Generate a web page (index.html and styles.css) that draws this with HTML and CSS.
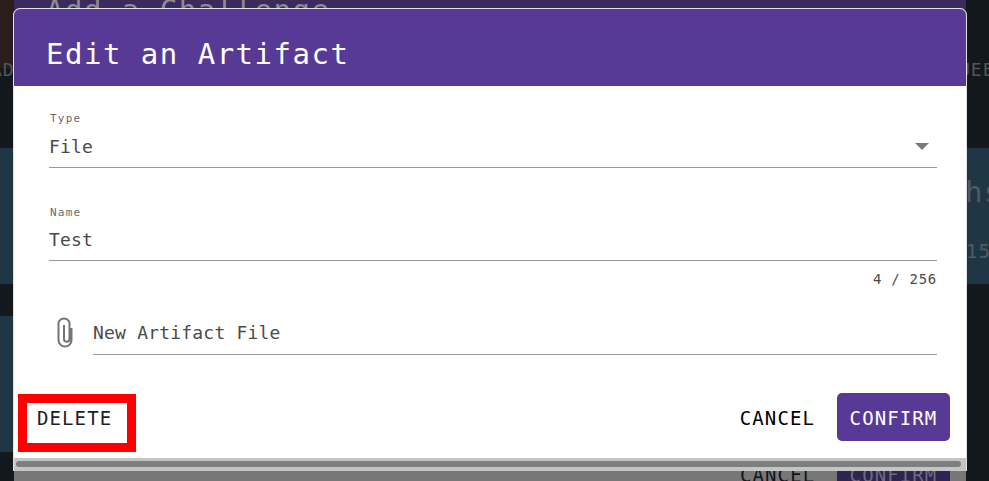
FILE: index.html
```html
<!DOCTYPE html>
<html lang="en">
<head>
<meta charset="utf-8">
<title>Edit an Artifact</title>
<link rel="stylesheet" href="styles.css">
</head>
<body>
<div class="backdrop">
  <div class="bg-strip"></div>
  <div class="bg-title-bar"><span class="bg-title">Add a Challenge</span></div>
  <span class="bg-text bg-left">AD</span>
  <span class="bg-text bg-right">UEE</span>
  <div class="bg-card bg-card-one"><span class="bg-big">hs</span><span class="bg-small">15</span></div>
  <div class="bg-card bg-card-two"></div>
  <div class="bg-under"><span class="bg-cancel">CANCEL</span><span class="bg-confirm">CONFIRM</span></div>
</div>
<main class="dialog">
  <header class="dialog-head"><h1 class="dialog-title">Edit an Artifact</h1></header>
  <div class="dialog-body">
    <div class="field">
      <span class="field-label">Type</span>
      <div class="field-row"><span class="field-value">File</span><span class="arrow"></span></div>
    </div>
    <div class="field field-name">
      <span class="field-label">Name</span>
      <div class="field-row field-row-name"><span class="field-value">Test</span></div>
      <div class="counter">4 / 256</div>
    </div>
    <div class="file-row">
      <svg class="clip" width="20" height="32" viewBox="0 0 20 32" fill="none" stroke="#747474" stroke-width="2">
        <path d="M15.5 11 V23 a6.5 6.5 0 0 1 -13 0 V6.5 a5.5 5 0 0 1 11 0 V22 a2.75 2.75 0 0 1 -5.5 0 V8"/>
      </svg>
      <div class="file-input"><span class="field-value">New Artifact File</span></div>
    </div>
  </div>
  <footer class="dialog-foot">
    <span class="delete-mark"><button class="btn btn-delete">DELETE</button></span>
    <div class="foot-right">
      <button class="btn btn-cancel">CANCEL</button>
      <button class="btn btn-confirm">CONFIRM</button>
    </div>
  </footer>
  <div class="scrollbar"><div class="scroll-thumb"></div></div>
</main>
</body>
</html>
```

FILE: styles.css
```css
* { box-sizing: border-box; }
html, body { margin: 0; height: 100%; overflow: hidden; }
body {
  position: relative;
  width: 989px;
  height: 481px;
  background: #12181c;
  font-family: "DejaVu Sans Mono", "Liberation Mono", monospace;
  color: #4a4a4a;
}
.backdrop { position: absolute; inset: 0; overflow: hidden; }
.bg-strip { position: absolute; left: 0; top: 0; width: 14px; height: 68px; background: #2b1d1b; }
.bg-title-bar {
  position: absolute; left: 14px; top: 0; width: 952px; height: 9px;
  background: #3a2a5e; overflow: hidden;
}
.bg-title { position: absolute; left: 32px; top: -8px; font-size: 29px; line-height: 36px; letter-spacing: 1.5px; color: #8e8a99; white-space: nowrap; }
.bg-text { position: absolute; top: 59px; font-size: 18px; line-height: 22px; letter-spacing: 1px; color: #555; }
.bg-left { left: -9px; }
.bg-right { left: 959px; }
.bg-card { position: absolute; left: 0; background: #1f3645; overflow: hidden; }
.bg-card-one { top: 148px; height: 136px; width: 989px; }
.bg-card-two { top: 316px; height: 136px; width: 14px; }
.bg-big { position: absolute; left: 965px; top: 26px; font-size: 29px; line-height: 36px; letter-spacing: 1.4px; color: #4e5c62; }
.bg-small { position: absolute; left: 966px; top: 92px; font-size: 19px; line-height: 22px; letter-spacing: 1px; color: #4e5c62; }
.bg-under {
  position: absolute; left: 14px; top: 440px; width: 952px; height: 41px;
  background: #777;
  padding: 23px 16px 0 726px;
  display: flex; justify-content: space-between;
  font-size: 19px; line-height: 24px; letter-spacing: 1.1px; color: #14141a;
}
.bg-confirm { width: 113px; height: 30px; background: #2e2452; color: #6d6a7c; text-align: center; }

.dialog {
  position: absolute; left: 13px; top: 8px; width: 954px; height: 463px;
  background: #fff;
  border: 1px solid #e2e2e2;
  border-bottom: 0;
  border-radius: 7px 7px 0 0;
  overflow: hidden;
  display: flex; flex-direction: column;
}
.dialog-head { height: 77px; background: #563a96; padding: 21px 32px 0; flex: none; }
.dialog-title { margin: 0; font-size: 29px; font-weight: 400; letter-spacing: 1.5px; line-height: 48px; color: #fff; }
.dialog-body { flex: 1; padding: 25px 29px 0 35px; display: flex; flex-direction: column; }
.field-label { display: block; font-size: 11px; line-height: 16px; letter-spacing: 1.2px; color: #6a6a6a; padding-left: 1px; }
.field-row { display: flex; align-items: center; justify-content: space-between; height: 41px; padding-bottom: 1px; border-bottom: 1px solid #9a9a9a; }
.field-row-name { height: 40px; padding-bottom: 3px; }
.field-value { font-size: 18px; letter-spacing: 0.2px; color: #4a4a4a; white-space: nowrap; }
.arrow { width: 0; height: 0; margin-right: 8px; border-left: 7px solid transparent; border-right: 7px solid transparent; border-top: 7px solid #7a7a7a; }
.field-name { margin-top: 37px; }
.counter { margin-top: 9px; font-size: 14px; line-height: 18px; letter-spacing: 0.7px; text-align: right; color: #4a4a4a; }
.file-row { display: flex; align-items: center; margin-top: 23px; }
.clip { flex: none; margin-left: 7px; margin-right: 17px; }
.file-input { flex: 1; height: 44px; display: flex; align-items: center; border-bottom: 1px solid #9a9a9a; }
.dialog-foot { flex: none; height: 78px; padding: 0 16px 4px 4px; display: flex; align-items: center; justify-content: space-between; }
.delete-mark { display: block; width: 118px; height: 58px; margin-top: 12px; border: 9px solid #ff0000; }
.btn { border: 0; background: none; font-family: inherit; font-size: 19px; letter-spacing: 1.1px; cursor: pointer; padding: 1px 0 0; }
.btn-delete { width: 100%; height: 100%; padding: 0 0 10px 10px; text-align: left; color: #1e1e28; }
.foot-right { display: flex; align-items: center; gap: 22px; }
.btn-cancel { color: #000; }
.btn-confirm { width: 113px; height: 48px; background: #563a96; color: #fff; border-radius: 5px; }
.scrollbar { flex: none; height: 13px; background: #c4c4c4; padding: 3px 5px 4px 2px; }
.scroll-thumb { height: 100%; background: #7c7f7f; border-radius: 3px; }
```
